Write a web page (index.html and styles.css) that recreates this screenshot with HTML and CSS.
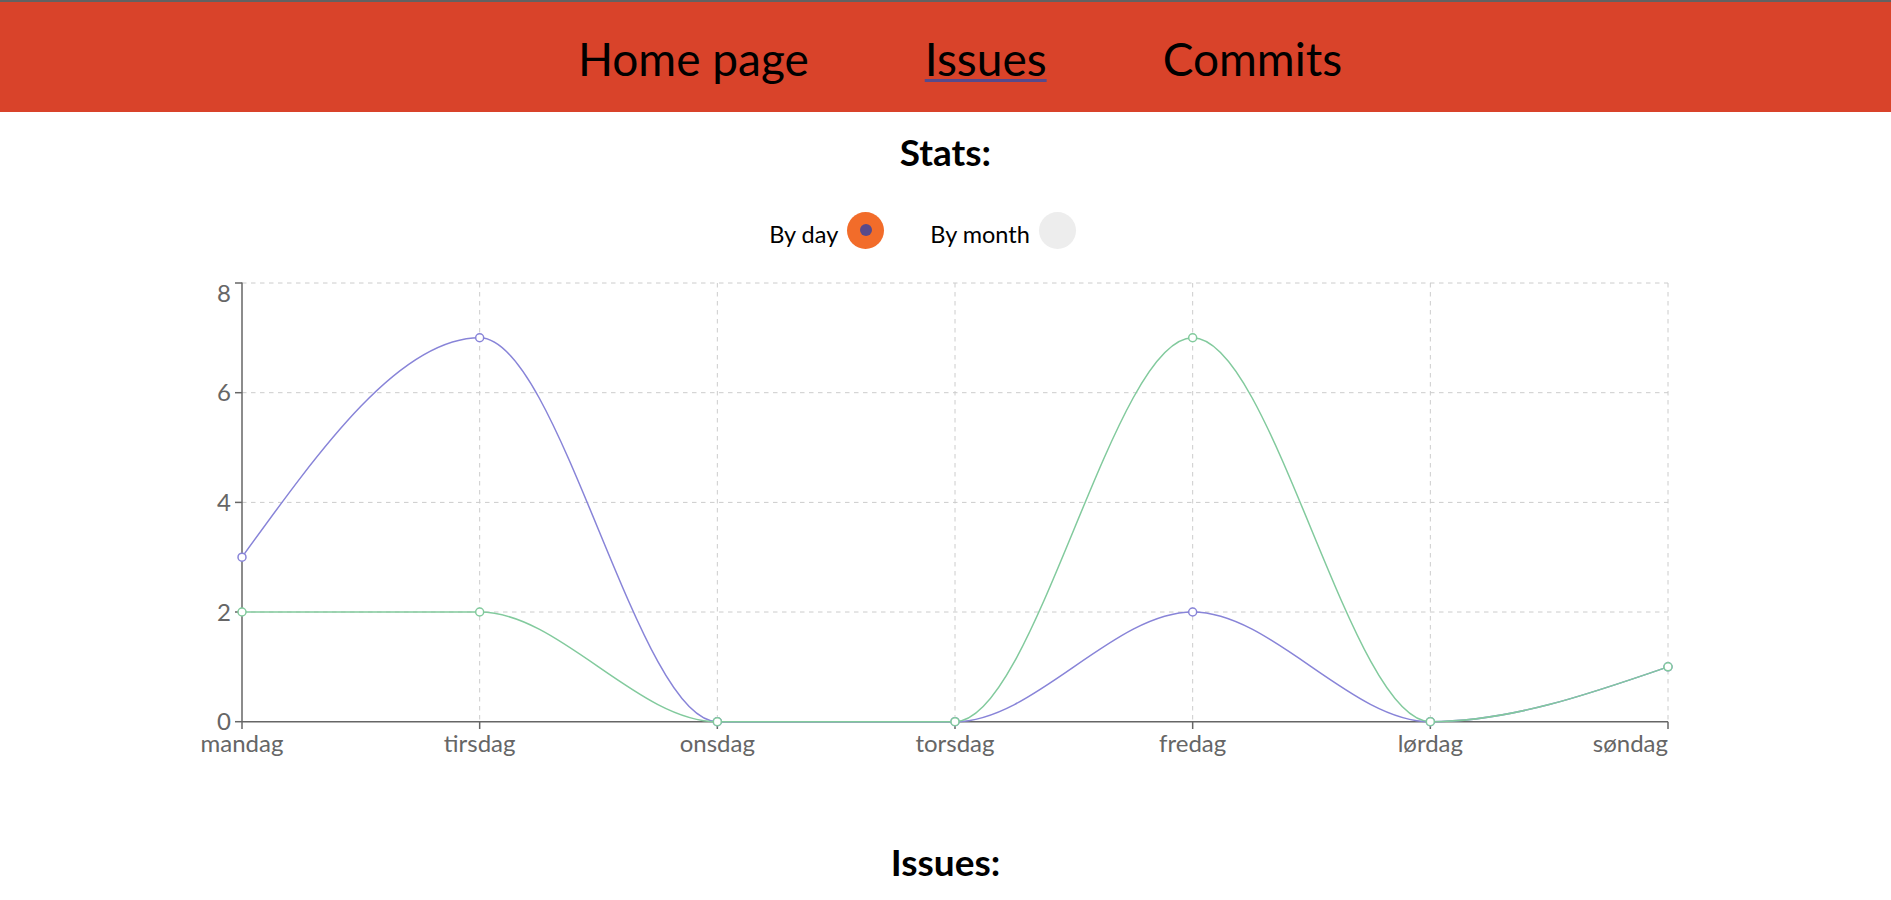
FILE: index.html
```html
<!DOCTYPE html>
<html lang="no">
<head>
<meta charset="utf-8">
<title>Issues</title>
<link rel="stylesheet" href="styles.css">
</head>
<body>
<header class="topbar">
  <nav class="nav">
    <a class="nav-link" href="#">Home page</a>
    <a class="nav-link nav-link-active" href="#">Issues</a>
    <a class="nav-link" href="#">Commits</a>
  </nav>
</header>
<main class="content">
  <h2 class="section-title">Stats:</h2>
  <div class="toggle-row">
    <label class="toggle-item">
      <span class="toggle-text">By day</span>
      <span class="radio radio-on"><span class="radio-dot"></span></span>
    </label>
    <label class="toggle-item">
      <span class="toggle-text">By month</span>
      <span class="radio radio-off"></span>
    </label>
  </div>
  <svg class="chart" width="1891" height="510" viewBox="0 0 1891 510" xmlns="http://www.w3.org/2000/svg">
    <g class="grid" stroke="#cccccc" stroke-dasharray="4.5 4.5" fill="none" stroke-width="1">
      <line x1="242" y1="23" x2="1668" y2="23"/>
      <line x1="242" y1="132.7" x2="1668" y2="132.7"/>
      <line x1="242" y1="242.4" x2="1668" y2="242.4"/>
      <line x1="242" y1="352" x2="1668" y2="352"/>
      <line x1="479.67" y1="23" x2="479.67" y2="461.7"/>
      <line x1="717.33" y1="23" x2="717.33" y2="461.7"/>
      <line x1="955" y1="23" x2="955" y2="461.7"/>
      <line x1="1192.67" y1="23" x2="1192.67" y2="461.7"/>
      <line x1="1430.33" y1="23" x2="1430.33" y2="461.7"/>
      <line x1="1668" y1="23" x2="1668" y2="461.7"/>
    </g>
    <g class="axis" stroke="#666666" stroke-width="1.5" fill="none">
      <line x1="242" y1="22.5" x2="242" y2="461.7"/>
      <line x1="242" y1="461.7" x2="1668" y2="461.7"/>
      <line x1="235" y1="23" x2="242" y2="23"/>
      <line x1="235" y1="132.7" x2="242" y2="132.7"/>
      <line x1="235" y1="242.4" x2="242" y2="242.4"/>
      <line x1="235" y1="352" x2="242" y2="352"/>
      <line x1="235" y1="461.7" x2="242" y2="461.7"/>
      <line x1="242" y1="461.7" x2="242" y2="469"/>
      <line x1="479.67" y1="461.7" x2="479.67" y2="469"/>
      <line x1="717.33" y1="461.7" x2="717.33" y2="469"/>
      <line x1="955" y1="461.7" x2="955" y2="469"/>
      <line x1="1192.67" y1="461.7" x2="1192.67" y2="469"/>
      <line x1="1430.33" y1="461.7" x2="1430.33" y2="469"/>
      <line x1="1668" y1="461.7" x2="1668" y2="469"/>
    </g>
    <g class="tick-labels">
      <text x="231" y="42" text-anchor="end">8</text>
      <text x="231" y="141.2" text-anchor="end">6</text>
      <text x="231" y="250.9" text-anchor="end">4</text>
      <text x="231" y="360.5" text-anchor="end">2</text>
      <text x="231" y="470.2" text-anchor="end">0</text>
      <text x="242" y="491.5" text-anchor="middle">mandag</text>
      <text x="479.67" y="491.5" text-anchor="middle">tirsdag</text>
      <text x="717.33" y="491.5" text-anchor="middle">onsdag</text>
      <text x="955" y="491.5" text-anchor="middle">torsdag</text>
      <text x="1192.67" y="491.5" text-anchor="middle">fredag</text>
      <text x="1430.33" y="491.5" text-anchor="middle">lørdag</text>
      <text x="1668" y="491.5" text-anchor="end">søndag</text>
    </g>
    <path class="line-a" fill="none" stroke="#8884d8" stroke-width="1.5" d="M242,297.15 C321.22,187.45 400.45,77.75 479.67,77.75 C558.89,77.75 638.11,461.7 717.33,461.7 C796.55,461.7 875.78,461.7 955,461.7 C1034.22,461.7 1113.45,352 1192.67,352 C1271.89,352 1351.11,461.7 1430.33,461.7 C1509.55,461.7 1588.78,434.28 1668,406.85"/>
    <g fill="#ffffff" stroke="#8884d8" stroke-width="1.5">
      <circle cx="242" cy="297.15" r="4"/>
      <circle cx="479.67" cy="77.75" r="4"/>
      <circle cx="717.33" cy="461.7" r="4"/>
      <circle cx="955" cy="461.7" r="4"/>
      <circle cx="1192.67" cy="352" r="4"/>
      <circle cx="1430.33" cy="461.7" r="4"/>
      <circle cx="1668" cy="406.85" r="4"/>
    </g>
    <path class="line-b" fill="none" stroke="#82ca9d" stroke-width="1.5" d="M242,352 C321.22,352 400.45,352 479.67,352 C558.89,352 638.11,461.7 717.33,461.7 C796.55,461.7 875.78,461.7 955,461.7 C1034.22,461.7 1113.45,77.75 1192.67,77.75 C1271.89,77.75 1351.11,461.7 1430.33,461.7 C1509.55,461.7 1588.78,434.28 1668,406.85"/>
    <g fill="#ffffff" stroke="#82ca9d" stroke-width="1.5">
      <circle cx="242" cy="352" r="4"/>
      <circle cx="479.67" cy="352" r="4"/>
      <circle cx="717.33" cy="461.7" r="4"/>
      <circle cx="955" cy="461.7" r="4"/>
      <circle cx="1192.67" cy="77.75" r="4"/>
      <circle cx="1430.33" cy="461.7" r="4"/>
      <circle cx="1668" cy="406.85" r="4"/>
    </g>
  </svg>
  <h2 class="section-title issues-title">Issues:</h2>
</main>
</body>
</html>
```
FILE: styles.css
```css
html, body {
  margin: 0;
  padding: 0;
  background: #ffffff;
}

body {
  font-family: "Lato", "Open Sans", sans-serif;
  color: #000000;
}

.topbar {
  box-sizing: border-box;
  height: 112px;
  border-top: 2px solid #626262;
  background: #d9432a;
  padding-top: 29px;
}

.nav {
  display: flex;
  justify-content: center;
  gap: 116px;
  padding-left: 29px;
}

.nav-link {
  font-size: 46px;
  line-height: 1.2;
  color: #000000;
  text-decoration: none;
}

.nav-link-active {
  text-decoration: underline;
  text-decoration-color: #574a8b;
  text-decoration-thickness: 3px;
  text-underline-offset: 3px;
}

.content {
  display: flex;
  flex-direction: column;
  align-items: center;
}

.section-title {
  margin: 17.5px 0 0;
  font-size: 37px;
  line-height: 1.2;
  font-weight: 700;
}

.toggle-row {
  display: flex;
  justify-content: center;
  margin-top: 38.1px;
}

.toggle-item {
  display: flex;
  align-items: center;
  margin-right: 46px;
}

.toggle-text {
  font-size: 23.5px;
  line-height: 1.2;
  padding-top: 7px;
  margin-right: 9px;
}

.radio {
  width: 37px;
  height: 37px;
  border-radius: 50%;
  display: flex;
  align-items: center;
  justify-content: center;
}

.radio-on {
  background: #f26c2a;
}

.radio-off {
  background: #ededed;
}

.radio-dot {
  width: 12px;
  height: 12px;
  border-radius: 50%;
  background: #574a8b;
}

.chart {
  display: block;
  margin-top: 11px;
}

.tick-labels {
  font-family: "Lato", "Open Sans", sans-serif;
  font-size: 24px;
  fill: #666666;
}

.issues-title {
  margin-top: 70.1px;
}
```
